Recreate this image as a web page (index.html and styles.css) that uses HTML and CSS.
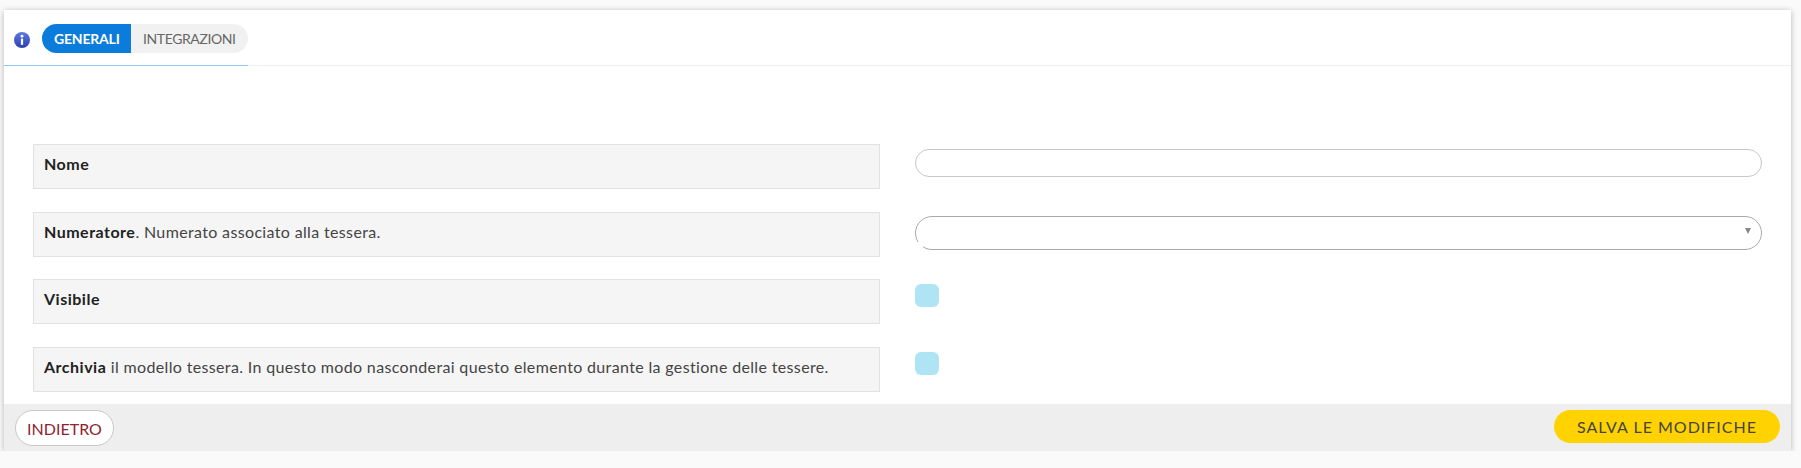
FILE: index.html
```html
<!DOCTYPE html>
<html lang="it">
  <head>
    <meta charset="UTF-8" />
    <meta name="viewport" content="width=device-width, initial-scale=1.0" />
    <title>Modello tessera</title>
    <link rel="stylesheet" href="styles.css">
  </head>
  <body>
    <div class="card">
      <div class="tabs-bar">
        <svg class="info-icon" viewBox="0 0 16 16" width="16" height="16" aria-hidden="true">
          <defs>
            <linearGradient id="infoFill" x1="0" y1="0" x2="0" y2="1">
              <stop offset="0" stop-color="#5f7be0" />
              <stop offset="1" stop-color="#2c3fb0" />
            </linearGradient>
          </defs>
          <circle cx="8" cy="8" r="8" fill="url(#infoFill)" />
          <circle cx="8" cy="4.2" r="1.4" fill="#fff" />
          <rect x="6.9" y="6.6" width="2.2" height="6.2" fill="#fff" />
        </svg>
        <div class="tabs">
          <span class="tab tab-active">GENERALI</span>
          <span class="tab tab-plain">INTEGRAZIONI</span>
        </div>
      </div>

      <div class="form">
        <div class="form-label"><b>Nome</b></div>
        <div class="form-field"><input class="text-input" type="text" /></div>

        <div class="form-label"><b>Numeratore</b>. Numerato associato alla tessera.</div>
        <div class="form-field">
          <div class="select-box"><span class="select-arrow"></span></div>
        </div>

        <div class="form-label"><b>Visibile</b></div>
        <div class="form-field"><span class="checkbox"></span></div>

        <div class="form-label"><b>Archivia</b> il modello tessera. In questo modo nasconderai questo elemento durante la gestione delle tessere.</div>
        <div class="form-field"><span class="checkbox"></span></div>
      </div>

      <div class="footer">
        <button class="btn btn-back">INDIETRO</button>
        <button class="btn btn-save">SALVA LE MODIFICHE</button>
      </div>
    </div>
  </body>
</html>
```

FILE: styles.css
```css
* {
  margin: 0;
  padding: 0;
  box-sizing: border-box;
}

body {
  font-family: "Lato", "Open Sans", sans-serif;
  background: #fafafa;
  color: #333;
  padding: 10px 10px 0 4px;
}

.card {
  background: white;
  height: 441px;
  box-shadow: 0 1px 6px rgba(0, 0, 0, 0.28);
  display: flex;
  flex-direction: column;
}

.tabs-bar {
  height: 56px;
  padding: 14px 0 0 10px;
  display: flex;
  align-items: flex-start;
  gap: 12px;
  border-bottom: 1px solid #eee;
  position: relative;
}

.tabs-bar::after {
  content: "";
  position: absolute;
  left: 0;
  bottom: -1px;
  width: 244px;
  height: 1px;
  background: #90c6ef;
}

.info-icon {
  margin-top: 8px;
}

.tabs {
  display: flex;
  height: 29px;
  border-radius: 15px;
  overflow: hidden;
  font-size: 14px;
}

.tab {
  display: flex;
  align-items: center;
  padding: 0 12px;
  background: #f1f1f1;
  color: #666;
}

.tab-active {
  width: 89px;
  background: #0b7bdc;
  color: white;
  font-weight: 700;
  letter-spacing: -0.2px;
}

.tab-plain {
  width: 117px;
  letter-spacing: -0.4px;
}

.form {
  flex: 1;
  padding: 78px 29px 0 29px;
  display: grid;
  grid-template-columns: 847px 1fr;
  grid-auto-rows: 45px;
  column-gap: 35px;
  row-gap: 22.5px;
  overflow: hidden;
}

.form-label {
  background: #f5f5f5;
  border: 1px solid #e2e2e2;
  padding: 0 10px 6px;
  display: flex;
  align-items: center;
  font-size: 16px;
  letter-spacing: 0.35px;
  white-space: pre-wrap;
  color: #444;
}

.form-label b {
  color: #222;
  letter-spacing: 0.5px;
}

.form-field {
  padding-top: 5px;
}

.text-input {
  display: block;
  width: 100%;
  height: 28px;
  border: 1px solid #c8c8c8;
  border-radius: 14px;
  background: white;
}

.select-box {
  position: relative;
  height: 34px;
  margin-top: -1px;
  border: 1px solid #aaa;
  border-radius: 17px;
}

.select-box::before {
  content: "";
  position: absolute;
  left: -1px;
  bottom: -1px;
  width: 8px;
  height: 8px;
  background: white;
}

.select-arrow {
  position: absolute;
  right: 10px;
  top: 11px;
  border-top: 6px solid #888;
  border-left: 3.5px solid transparent;
  border-right: 3.5px solid transparent;
}

.checkbox {
  display: block;
  width: 24px;
  height: 23px;
  border-radius: 6px;
  background: #aee4f4;
}

.footer {
  height: 47px;
  background: #eee;
  padding: 6px 11px 0 11px;
  display: flex;
  justify-content: space-between;
  align-items: flex-start;
}

.btn {
  font-family: inherit;
  border-radius: 18px;
  font-size: 16px;
}

.btn-back {
  width: 99px;
  height: 36px;
  background: white;
  border: 1px solid #c8c8c8;
  color: #8e2430;
}

.btn-save {
  width: 226px;
  height: 33px;
  background: #ffd200;
  border: none;
  color: #444;
  letter-spacing: 1px;
}
```
